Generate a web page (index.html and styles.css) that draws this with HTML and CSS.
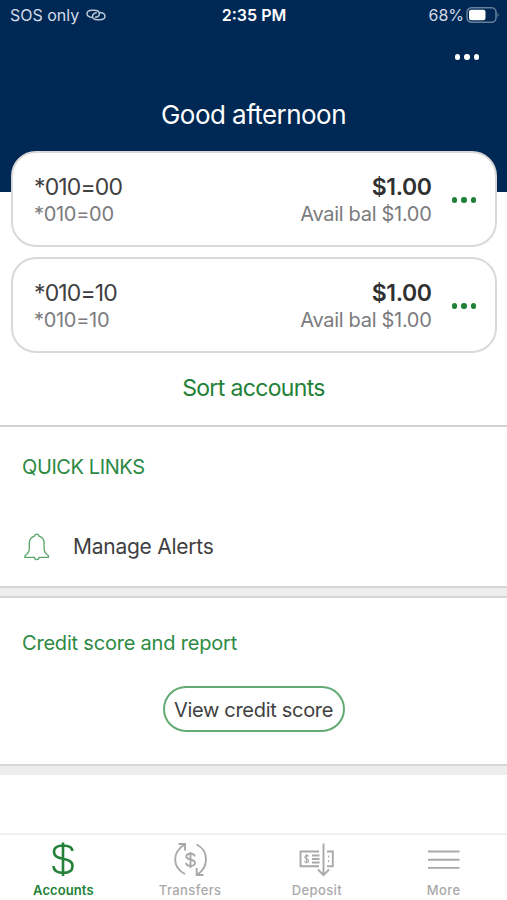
FILE: index.html
```html
<!DOCTYPE html>
<html lang="en">
<head>
  <meta charset="UTF-8">
  <meta name="viewport" content="width=device-width, initial-scale=1">
  <title>Accounts</title>
  <link rel="stylesheet" href="styles.css">
</head>
<body>
  <div class="app">

    <!-- Header -->
    <header class="header">
      <div class="status-bar">
        <div class="status-left">
          <span class="carrier">SOS only</span>
          <svg class="link-icon" width="20" height="12" viewBox="0 0 20 12">
            <path d="M6.5 8.5C3.5 8.3 1 6.8 1 4.5C1 2.6 3 1.3 6.2 1.3H8.5C11.5 1.3 13.3 2.8 13.3 4.8C13.3 6.8 11.5 8.2 9 8.2"/>
            <path d="M13.2 3.5C16.5 3.6 19 5 19 7.3C19 9.4 17 10.7 13.8 10.7H11.5C8.5 10.7 6.5 9.3 6.5 7.3C6.5 5.3 8.3 3.8 10.8 3.8"/>
          </svg>
        </div>
        <span class="time">2:35 PM</span>
        <div class="status-right">
          <span class="percent">68%</span>
          <svg width="34" height="16" viewBox="0 0 34 16">
            <rect class="battery-shell" x="1" y="0.8" width="29" height="14.4" rx="4.5"/>
            <rect x="3" y="2.8" width="16.5" height="10.4" rx="2.2" fill="#fff"/>
            <path d="M31.5 5.8C33 6.5 33 9.5 31.5 10.2Z" fill="#66809c"/>
          </svg>
        </div>
      </div>
      <button class="dots header-menu" aria-label="Menu"><i></i><i></i><i></i></button>
      <h1>Good afternoon</h1>
    </header>

    <!-- Account cards -->
    <section class="accounts">
      <div class="card">
        <div class="card-name">
          <div class="name">*010=00</div>
          <div class="sub">*010=00</div>
        </div>
        <div class="card-balance">
          <div class="amount">$1.00</div>
          <div class="avail">Avail bal $1.00</div>
        </div>
        <button class="dots" aria-label="Account options"><i></i><i></i><i></i></button>
      </div>
      <div class="card">
        <div class="card-name">
          <div class="name">*010=10</div>
          <div class="sub">*010=10</div>
        </div>
        <div class="card-balance">
          <div class="amount">$1.00</div>
          <div class="avail">Avail bal $1.00</div>
        </div>
        <button class="dots" aria-label="Account options"><i></i><i></i><i></i></button>
      </div>
      <a class="sort">Sort accounts</a>
    </section>

    <!-- Quick links -->
    <section class="quick-links">
      <h2>QUICK LINKS</h2>
      <a class="alert-link">
        <svg width="28" height="28" viewBox="0 0 28 28">
          <path d="M12.5 3.2C12.5 .5 16.9 .5 16.9 3.2C20.4 4.2 22.1 7 22.1 10.5V15.5C22.1 18.5 23.2 20.5 26.4 22.7V24.3H17C17 27.5 12.4 27.5 12.4 24.3H3V22.7C6.2 20.5 7.3 18.5 7.3 15.5V10.5C7.3 7 9 4.2 12.5 3.2Z"/>
        </svg>
        <span>Manage Alerts</span>
      </a>
    </section>

    <div class="divider"></div>

    <!-- Credit score -->
    <section class="credit">
      <h2>Credit score and report</h2>
      <button class="credit-button">View credit score</button>
    </section>

    <div class="divider last"></div>

    <!-- Tab bar -->
    <nav class="tabs">
      <a class="tab active">
        <svg width="36" height="36" viewBox="0 0 36 36">
          <path d="M18 1.5V35M27.3 10C27.3 6.4 23.5 4.5 18.3 4.5C12.5 4.5 9 6.9 9 10.8C9 15.4 12.8 16.5 18 17.7C23.8 19 27.5 20.4 27.5 25.2C27.5 29.5 23.8 31.9 18 31.9C12 31.9 8.7 29.2 8.4 25"/>
        </svg>
        <span>Accounts</span>
      </a>
      <a class="tab">
        <svg width="36" height="36" viewBox="0 0 36 36">
          <path d="M13 33C0 26.5 0 11.5 12.5 3.5M6.5 3H13V9.5"/>
          <path d="M24.5 3.5C37 9.5 37 25.5 25.5 33.5M24.7 27V34H31.5"/>
          <path d="M18.5 11V27M22.8 15.3C22.3 12 14.5 11.7 14.3 15.5C14.1 19.4 23 17.5 23 22C23 26 14.1 25.8 14 21.8"/>
        </svg>
        <span>Transfers</span>
      </a>
      <a class="tab">
        <svg width="38" height="36" viewBox="0 0 38 36">
          <path d="M21 10.5H2.5V25.3H21M29 10.5H34.8V25.3H29"/>
          <path d="M25.5 2.5V34M20 28.5L25.5 34.2L31 28.5"/>
          <path d="M14 14.5H21.5M14 18H21.5M14 21.5H21.5"/>
          <path class="fine" d="M8.5 13V22.5M10.5 15.5C10 14 6.8 14.1 6.8 16C6.8 18 10.6 17.3 10.6 19.7C10.6 21.9 7 21.8 6.6 20.1M30.5 14.5V16.5M30.5 19V21"/>
        </svg>
        <span>Deposit</span>
      </a>
      <a class="tab">
        <svg width="36" height="36" viewBox="0 0 36 36">
          <path d="M2 10.5H33.5M2 18.7H33.5M2 26.9H33.5"/>
        </svg>
        <span>More</span>
      </a>
    </nav>

  </div>
</body>
</html>
```
FILE: styles.css
```css
* {
  box-sizing: border-box;
}

body {
  margin: 0;
  background-color: #fff;
  font-family: Inter, "Liberation Sans", sans-serif;
  color: #3f3f41;
}

h1,
h2 {
  margin: 0;
  font-weight: 400;
}

button {
  padding: 0;
  border: none;
  background: none;
  font-family: inherit;
  color: inherit;
}

svg {
  fill: none;
  flex-shrink: 0;
}

.app {
  height: 900px;
  display: flex;
  flex-direction: column;
  overflow: hidden;
}

/* Header */
.header {
  height: 192px;
  flex-shrink: 0;
  display: flex;
  flex-direction: column;
  background-color: #002855;
  color: #fff;
}

.status-bar {
  display: grid;
  grid-template-columns: 1fr auto 1fr;
  align-items: center;
  height: 30px;
  padding: 0 7px 0 10px;
  font-size: 16px;
}

.status-left,
.status-right {
  display: flex;
  align-items: center;
  color: #d3dce8;
}

.status-left {
  gap: 7px;
}

.status-right {
  justify-content: flex-end;
  gap: 2px;
}

.link-icon {
  stroke: #b9c6d6;
  stroke-width: 1.5;
}

.time {
  margin-right: 2px;
  font-weight: 600;
}

.battery-shell {
  stroke: #66809c;
  stroke-width: 1.5;
}

.dots {
  display: flex;
  gap: 4px;
  color: #1f8135;
}

.dots i {
  width: 5.5px;
  height: 5.5px;
  border-radius: 50%;
  background-color: currentColor;
}

.header-menu {
  align-self: flex-end;
  margin: 24px 28px 0 0;
  color: #fff;
}

.header h1 {
  margin-top: 39px;
  font-size: 26px;
  line-height: 32px;
  letter-spacing: -0.55px;
  text-align: center;
}

/* Accounts */
.accounts {
  height: 276px;
  flex-shrink: 0;
  margin-top: -41px;
  display: flex;
  flex-direction: column;
  gap: 10px;
  border-bottom: 2px solid #d2d2d4;
}

.card {
  display: flex;
  align-items: center;
  height: 96px;
  flex-shrink: 0;
  margin: 0 10px 0 11px;
  padding: 2px 19px 0 21px;
  border: 2px solid #d9d9da;
  border-radius: 25px;
  background-color: #fff;
}

.card-balance {
  margin-left: auto;
  margin-right: 20px;
  text-align: right;
}

.name,
.amount {
  font-size: 23px;
  line-height: 27px;
}

.name {
  letter-spacing: -0.85px;
}

.amount {
  font-weight: 600;
  letter-spacing: -0.4px;
  color: #303032;
}

.sub,
.avail {
  font-size: 20px;
  line-height: 26px;
  letter-spacing: -0.3px;
  color: #7b7b7e;
}

.sort {
  margin-top: 10px;
  font-size: 23px;
  line-height: 30px;
  letter-spacing: -0.65px;
  text-align: center;
  color: #238138;
}

/* Quick links */
.quick-links {
  height: 159px;
  flex-shrink: 0;
  padding: 27px 22px 0;
}

h2 {
  font-size: 20px;
  line-height: 26px;
  letter-spacing: -0.2px;
  color: #2c8a43;
}

.quick-links h2 {
  letter-spacing: -0.4px;
}

.alert-link {
  display: flex;
  align-items: center;
  gap: 23px;
  margin-top: 53px;
  font-size: 21px;
  line-height: 28px;
  letter-spacing: -0.25px;
}

.alert-link svg {
  stroke: #58a56b;
  stroke-width: 1.3;
}

.divider {
  height: 12px;
  flex-shrink: 0;
  background-color: #ededed;
  border-top: 2px solid #d6d6d7;
  border-bottom: 2px solid #d6d6d7;
}

.divider.last {
  height: 11px;
  border-bottom: none;
}

/* Credit score */
.credit {
  height: 166px;
  flex-shrink: 0;
  display: flex;
  flex-direction: column;
  padding: 32px 22px 0;
}

.credit-button {
  align-self: center;
  width: 182px;
  height: 46px;
  margin-top: 30px;
  padding-top: 2px;
  border: 2px solid #64aa73;
  border-radius: 23px;
  font-size: 20px;
  letter-spacing: -0.3px;
}

/* Tab bar */
.tabs {
  height: 67px;
  flex-shrink: 0;
  margin-top: auto;
  display: grid;
  grid-template-columns: repeat(4, 1fr);
  border-top: 2px solid #efefef;
}

.tab {
  display: flex;
  flex-direction: column;
  align-items: center;
  padding-top: 6px;
  font-size: 13px;
  font-weight: 500;
  line-height: 16px;
  letter-spacing: 0.4px;
  color: #a9a9ab;
}

.tab svg {
  margin-bottom: 5px;
  stroke: currentColor;
  stroke-width: 1.9;
}

.tab .fine {
  stroke-width: 1.2;
}

.tab.active {
  font-weight: 600;
  letter-spacing: 0.1px;
  color: #238138;
}

.tab.active svg {
  stroke-width: 2.6;
}
```
